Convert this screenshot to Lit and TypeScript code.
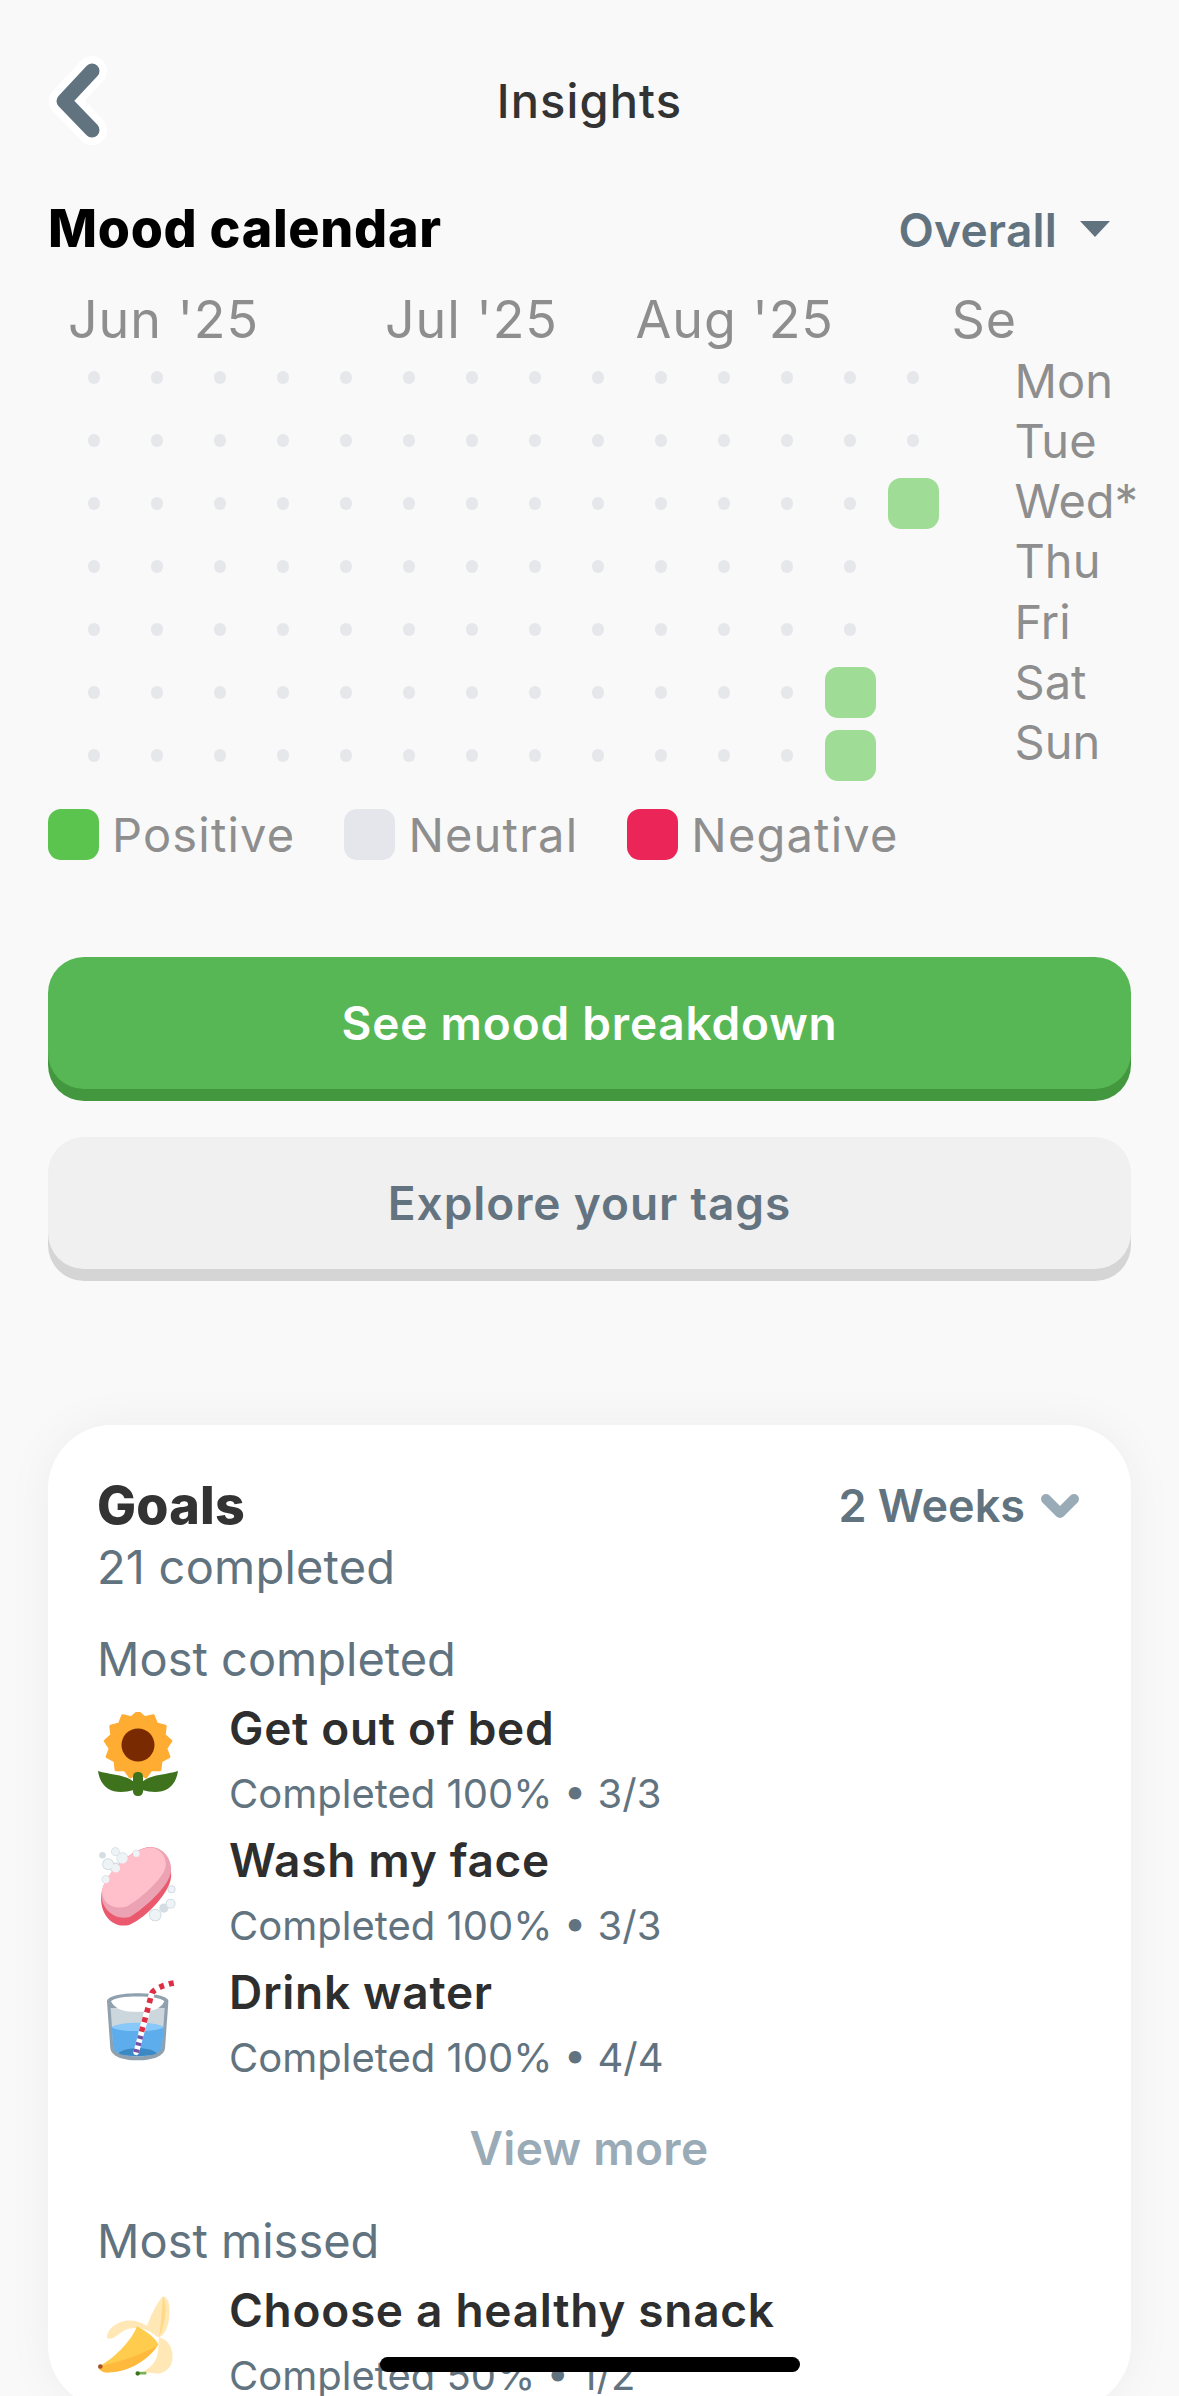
import { LitElement, html, css } from "lit";
import { customElement } from "lit/decorators.js";

const COLS = 14;
const ROWS = 7;
const rowDots = [14, 14, 13, 13, 13, 12, 12];
const filled: Record<number, number> = { 2: 13, 5: 12, 6: 12 };

const petals = (() => {
  const pts: string[] = [];
  const n = 13;
  for (let i = 0; i < n * 2; i++) {
    const a = (Math.PI * i) / n - Math.PI / 2;
    const r = i % 2 === 0 ? 33 : 28;
    pts.push(`${(40 + r * Math.cos(a)).toFixed(1)},${(33 + r * Math.sin(a)).toFixed(1)}`);
  }
  return pts.join(" ");
})();

const sunflower = html`<svg class="emoji up" viewBox="0 0 80 84" width="80" height="84">
  <polygon points=${petals} fill="#ffac33" stroke="#ffac33" stroke-width="3" stroke-linejoin="round"></polygon>
  <circle cx="40" cy="33" r="16.5" fill="#792a00"></circle>
  <path d="M0 59C12 63 27 62 36 70V78C18 83 3 79 0 59Z" fill="#3e721d"></path>
  <path d="M80 59C68 63 53 62 44 70V78C62 83 77 79 80 59Z" fill="#3e721d"></path>
  <rect x="35" y="60" width="10" height="24" rx="4.5" fill="#3e721d"></rect>
</svg>`;

const soap = html`<svg class="emoji" viewBox="120 75 240 250" width="80" height="83">
  <g fill="#d3dde3">
    <circle cx="133" cy="103" r="10"></circle>
    <circle cx="172" cy="92" r="13"></circle>
    <circle cx="193" cy="112" r="18"></circle>
    <circle cx="150" cy="130" r="18"></circle>
    <circle cx="173" cy="142" r="17"></circle>
    <circle cx="143" cy="176" r="13"></circle>
    <circle cx="235" cy="98" r="12"></circle>
    <circle cx="341" cy="205" r="12"></circle>
    <circle cx="338" cy="249" r="15"></circle>
    <circle cx="318" cy="262" r="14"></circle>
    <circle cx="292" cy="283" r="19"></circle>
  </g>
  <path d="M129 228C133 178 205 92 270 79C318 74 345 122 339 172C335 212 270 288 215 312C168 326 126 285 129 228Z" fill="#ea596e"></path>
  <path d="M130 218C134 172 205 90 270 79C318 74 345 118 339 155C333 195 262 262 215 289C170 300 128 265 130 218Z" fill="#eba2b2"></path>
  <path d="M133 205C140 162 210 92 268 80C308 76 330 112 322 142C312 176 250 232 205 258C165 268 127 245 133 205Z" fill="#ffbfcb"></path>
  <g fill="#eef3f6">
    <circle cx="172" cy="92" r="11"></circle>
    <circle cx="193" cy="112" r="16"></circle>
    <circle cx="150" cy="130" r="15"></circle>
    <circle cx="173" cy="142" r="13"></circle>
    <circle cx="143" cy="176" r="11"></circle>
    <circle cx="235" cy="98" r="10"></circle>
    <circle cx="341" cy="205" r="9"></circle>
    <circle cx="338" cy="249" r="12"></circle>
    <circle cx="292" cy="283" r="16"></circle>
  </g>
</svg>`;

const glass = html`<svg class="emoji shift" viewBox="130 470 230 250" width="77" height="83">
  <path d="M141 540C141 526 180 516 233 516C286 516 326 526 326 540L316 680C314 705 280 718 233 718C186 718 153 705 151 680Z" fill="#8fa1af"></path>
  <path d="M152 560H315L306 678C304 695 275 706 233 706C191 706 162 695 160 678Z" fill="#ccd6dd"></path>
  <path d="M153 540C165 530 195 526 233 526C271 526 302 530 314 540C300 568 270 572 233 572C196 572 168 568 153 540Z" fill="#fff"></path>
  <path d="M155 618C180 604 285 600 313 618L306 680C304 696 275 706 233 706C191 706 162 696 160 680Z" fill="#5dadec"></path>
  <path d="M155 618C180 600 285 600 313 618C285 634 180 634 155 618Z" fill="#88c9f9"></path>
  <path d="M176 697C190 676 276 676 291 697C274 708 192 708 176 697Z" fill="#3b88c3"></path>
  <path d="M229 694L262 570" stroke="#fff" stroke-width="17" stroke-linecap="round"></path>
  <path d="M229 694L243 642" stroke="#7450a8" stroke-width="17" stroke-dasharray="10 11"></path>
  <path d="M245 632L262 570L276 516C280 505 310 490 348 484" stroke="#fff" stroke-width="17" fill="none" stroke-linecap="round"></path>
  <path d="M245 632L262 570L276 516C280 505 310 490 348 484" stroke="#dd2e44" stroke-width="17" fill="none" stroke-dasharray="15 15"></path>
</svg>`;

const banana = html`<svg class="emoji" viewBox="295 895 228 242" width="76" height="81">
  <path d="M490 895C510 900 512 930 508 965C504 995 490 1015 478 1018C470 1018 450 1000 442 985C450 960 470 915 490 895Z" fill="#ffe8b6"></path>
  <path d="M490 895C500 915 500 950 490 985C484 1005 480 1015 478 1018C482 995 486 950 490 895Z" fill="#ffd983"></path>
  <path d="M322 1020C322 985 370 960 410 970C440 978 470 1000 478 1020C440 985 395 985 370 1000C355 1010 335 1030 322 1020Z" fill="#ffe8b6"></path>
  <path d="M296 1106C340 1085 395 1030 412 985C440 1000 468 1020 476 1040C450 1085 385 1125 320 1124C305 1122 296 1115 296 1106Z" fill="#ffcc4d"></path>
  <path d="M296 1106C350 1095 420 1075 472 1044C445 1088 385 1125 320 1124C305 1122 296 1115 296 1106Z" fill="#ffac33" opacity=".55"></path>
  <circle cx="302" cy="1106" r="7" fill="#a0522d"></circle>
  <path d="M478 1018C505 1025 522 1050 518 1085C514 1115 490 1130 465 1126C450 1124 436 1122 424 1126C450 1110 478 1095 476 1040Z" fill="#ffe8b6"></path>
  <path d="M414 1126H440" stroke="#77b255" stroke-width="8"></path>
  <circle cx="414" cy="1127" r="6.5" fill="#3e721d"></circle>
</svg>`;

interface Goal { icon: unknown; name: string; sub: string }
const completed: Goal[] = [
  { icon: sunflower, name: "Get out of bed", sub: "Completed 100% • 3/3" },
  { icon: soap, name: "Wash my face", sub: "Completed 100% • 3/3" },
  { icon: glass, name: "Drink water", sub: "Completed 100% • 4/4" },
];
const missed: Goal[] = [{ icon: banana, name: "Choose a healthy snack", sub: "Completed 50% • 1/2" }];

const months = [
  { label: "Jun '25", w: 317 },
  { label: "Jul '25", w: 250.5 },
  { label: "Aug '25", w: 316 },
  { label: "Se", w: 62 },
];
const days = ["Mon", "Tue", "Wed*", "Thu", "Fri", "Sat", "Sun"];

@customElement("app-root")
export class AppRoot extends LitElement {
  static styles = css`
    :host {
      display: block;
      position: relative;
      width: 1179px;
      height: 2396px;
      overflow: hidden;
      background: #f9f9f9;
      font-family: Inter, "Noto Sans", sans-serif;
    }
    .page { padding: 50px 48px 0; display: flex; flex-direction: column; }
    .top { display: grid; grid-template-columns: 1fr auto 1fr; align-items: center; height: 102px; }
    .back { display: block; margin-left: -2px; }
    .title { font-size: 47px; font-weight: 500; color: #333; line-height: 102px; letter-spacing: 1.1px; }
    .head { display: flex; justify-content: space-between; align-items: center; height: 78px; margin-top: 38px; }
    h2 { margin: 0; font-size: 52px; font-weight: 800; color: #000; line-height: 78px; letter-spacing: 0.7px; }
    .filter { display: flex; align-items: center; gap: 23px; padding: 3px 21px 0 0; font-size: 46px; font-weight: 600; color: #627380; line-height: 75px; letter-spacing: 0.2px; }
    .tri { display: block; margin-top: -3px; }
    .months { display: flex; height: 54px; margin-top: 25px; margin-bottom: -1px; margin-left: 20px; font-size: 52px; line-height: 54px; color: #8e8e8e; letter-spacing: 0.9px; }
    .month { white-space: nowrap; flex: none; }
    .cal { display: flex; align-items: flex-start; margin-left: 14.5px; }
    .grid { display: grid; grid-template-columns: repeat(${COLS}, 63px); grid-auto-rows: 63px; flex: none; }
    .cell { display: flex; align-items: center; justify-content: center; }
    .dot { width: 12.5px; height: 13px; border-radius: 50%; background: #e5e7ea; }
    .fill { width: 51px; height: 51px; border-radius: 13px; background: #9fdc95; }
    .days { margin-left: 70px; padding-top: 4.5px; font-size: 47px; line-height: 60.3px; color: #8e8e8e; letter-spacing: 0; white-space: nowrap; }
    .legend { display: flex; margin-top: 21.5px; height: 51px; align-items: center; }
    .lg { display: flex; align-items: center; gap: 13px; font-size: 47px; color: #8e8e8e; letter-spacing: 1.2px; margin-right: 49px; }
    .sw { width: 51px; height: 51px; border-radius: 13px; flex: none; }
    .pos { background: #5bc44f; }
    .neu { background: #e4e6eb; }
    .neg { background: #eb2558; }
    .btn { height: 132px; border-radius: 36px; display: flex; align-items: center; justify-content: center; font-size: 46px; font-weight: 600; }
    .green { margin-top: 97px; background: #57b755; color: #fff; box-shadow: 0 12px 0 #43983f; letter-spacing: 0.8px; }
    .gray { margin-top: 48px; background: #f0f0f0; color: #647380; box-shadow: 0 12px 0 #d5d5d5; letter-spacing: 0.9px; }
    .card { margin-top: 156px; background: #fff; border-radius: 64px; padding: 52px 50px 0 49px; box-shadow: 0 0 48px rgba(0, 0, 0, 0.05); }
    .card-head { display: flex; justify-content: space-between; align-items: flex-start; }
    .goals { font-size: 52px; font-weight: 800; color: #333; line-height: 58px; letter-spacing: 0.2px; }
    .range { display: flex; align-items: center; gap: 16px; padding-right: 2px; font-size: 45px; font-weight: 600; color: #627380; line-height: 58px; }
    .count { font-size: 47px; color: #627380; line-height: 64px; margin-bottom: 24.5px; letter-spacing: 0.2px; }
    .label { font-size: 47px; color: #627380; line-height: 72px; }
    .row { display: grid; grid-template-columns: 132px 1fr; height: 132px; }
    .icon { padding: 19px 0 0 0.5px; }
    .emoji { display: block; }
    .up { margin-top: -2px; }
    .shift { margin-left: 5px; }
    .name { font-size: 46px; font-weight: 600; color: #2e2e2e; line-height: 66px; white-space: nowrap; letter-spacing: 0.7px; }
    .sub { font-size: 40px; color: #627380; line-height: 66px; white-space: nowrap; }
    .more { text-align: center; font-size: 46px; font-weight: 600; color: #9aabb8; line-height: 114px; letter-spacing: 0.3px; }
    .home { position: absolute; left: 380px; top: 2357px; width: 420px; height: 15px; border-radius: 8px; background: #000; }
  `;

  private goal(g: Goal) {
    return html`<div class="row">
      <div class="icon">${g.icon}</div>
      <div><div class="name">${g.name}</div><div class="sub">${g.sub}</div></div>
    </div>`;
  }

  render() {
    return html`
      <div class="page">
        <div class="top">
          <svg class="back" width="62" height="90" viewBox="0 0 62 90">
            <path d="M46 15L18 45L46 74" fill="none" stroke="#fff" stroke-width="30" stroke-linecap="round" stroke-linejoin="round"></path>
            <path d="M46 15L18 45L46 74" fill="none" stroke="#627380" stroke-width="15" stroke-linecap="round" stroke-linejoin="round"></path>
          </svg>
          <div class="title">Insights</div>
          <div></div>
        </div>
        <div class="head">
          <h2>Mood calendar</h2>
          <div class="filter">Overall
            <svg class="tri" width="30" height="16" viewBox="0 0 30 16"><path d="M0 0H30L15 16Z" fill="#627380"></path></svg>
          </div>
        </div>
        <div class="months">
          ${months.map((m) => html`<div class="month" style="width:${m.w}px">${m.label}</div>`)}
        </div>
        <div class="cal">
          <div class="grid">
            ${Array.from({ length: ROWS }).map((_, r) =>
              Array.from({ length: COLS }).map((_, c) => {
                if (filled[r] === c) return html`<div class="cell"><div class="fill"></div></div>`;
                return html`<div class="cell">${c < rowDots[r] ? html`<div class="dot"></div>` : ""}</div>`;
              })
            )}
          </div>
          <div class="days">${days.map((d) => html`<div>${d}</div>`)}</div>
        </div>
        <div class="legend">
          <div class="lg"><span class="sw pos"></span>Positive</div>
          <div class="lg"><span class="sw neu"></span>Neutral</div>
          <div class="lg"><span class="sw neg"></span>Negative</div>
        </div>
        <div class="btn green">See mood breakdown</div>
        <div class="btn gray">Explore your tags</div>
        <div class="card">
          <div class="card-head">
            <div class="goals">Goals</div>
            <div class="range">2 Weeks
              <svg width="38" height="24" viewBox="0 0 38 24"><path d="M5 5L19 19L33 5" fill="none" stroke="#9aabb8" stroke-width="10" stroke-linecap="round" stroke-linejoin="round"></path></svg>
            </div>
          </div>
          <div class="count">21 completed</div>
          <div class="label">Most completed</div>
          ${completed.map((g) => this.goal(g))}
          <div class="more">View more</div>
          <div class="label">Most missed</div>
          ${missed.map((g) => this.goal(g))}
        </div>
      </div>
      <div class="home"></div>
    `;
  }
}
